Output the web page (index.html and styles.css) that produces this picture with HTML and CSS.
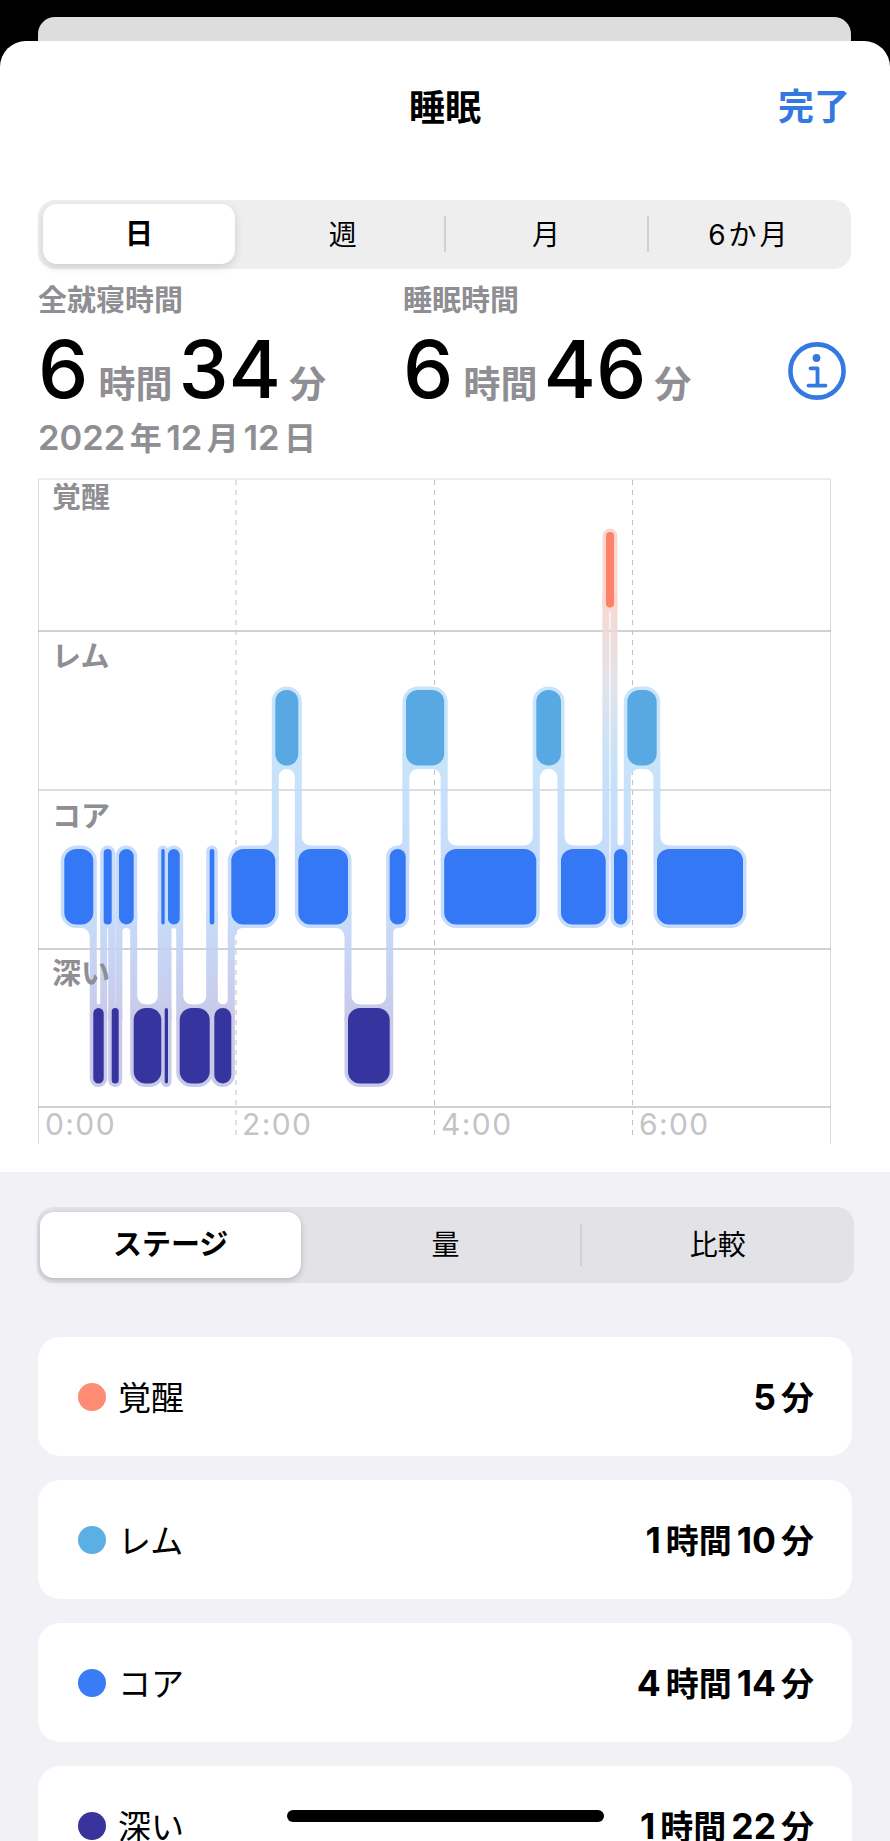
FILE: index.html
```html
<!DOCTYPE html>
<html lang="ja">
<head>
<meta charset="utf-8">
<title>睡眠</title>
<link rel="stylesheet" href="styles.css">
</head>
<body>
<div class="back-card"></div>
<main class="sheet">
  <header class="nav">
    <span></span>
    <h1 class="nav-title">睡眠</h1>
    <a class="nav-done">完了</a>
  </header>

  <div class="seg seg-period">
    <div class="seg-item is-active">日</div>
    <div class="seg-item">週</div>
    <div class="seg-item has-sep">月</div>
    <div class="seg-item has-sep spaced">6か月</div>
  </div>

  <section class="stats">
    <div class="stat">
      <div class="stat-label">全就寝時間</div>
      <div class="stat-value"><b>6</b><span>時間</span><b>34</b><span>分</span></div>
    </div>
    <div class="stat">
      <div class="stat-label">睡眠時間</div>
      <div class="stat-value"><b>6</b><span>時間</span><b>46</b><span>分</span></div>
    </div>
    <svg class="info" viewBox="0 0 58 58" aria-label="情報">
      <circle cx="29" cy="29" r="26.6" fill="none" stroke="#3478e2" stroke-width="4.6"/>
      <circle cx="28.5" cy="16" r="3.9" fill="#3478e2"/>
      <path d="M22.5 26.3h7v17M20.5 43.6h17" fill="none" stroke="#3478e2" stroke-width="3.8" stroke-linecap="round" stroke-linejoin="round"/>
    </svg>
  </section>
  <div class="date">2022<i>年</i>12<i>月</i>12<i>日</i></div>

  <svg id="chart" class="chart" viewBox="38 470 800 680" width="800" height="680">
    <defs>
      <linearGradient id="g-AC" x1="0" y1="0" x2="0" y2="1"><stop offset="0" stop-color="#f9d5cd"/><stop offset=".35" stop-color="#dfe2ea"/><stop offset=".6" stop-color="#c4e0f8"/><stop offset="1" stop-color="#c2dafa"/></linearGradient>
      <linearGradient id="g-RC" x1="0" y1="0" x2="0" y2="1"><stop offset="0" stop-color="#c4e2fa"/><stop offset="1" stop-color="#c2dafa"/></linearGradient>
      <linearGradient id="g-CD" x1="0" y1="0" x2="0" y2="1"><stop offset="0" stop-color="#c2dafa"/><stop offset="1" stop-color="#c5c5e8"/></linearGradient>
    </defs>
    <g class="grid-frame">
      <path d="M38.5 478H830.5M38.5 478V1143M830.5 478V1143"/>
    </g>
    <g class="grid-row">
      <path d="M38 630H831"/>
      <path class="soft" d="M38 789H831"/>
      <path d="M38 948H831"/>
      <path d="M38 1106H831"/>
    </g>
    <g class="grid-dash">
      <path d="M236 479V1138M434.5 479V1138M632.5 479V1138"/>
    </g>
    <g id="halos" class="halos"></g>
    <g id="bars"></g>
    <g class="chart-label">
      <text x="52" y="507">覚醒</text>
      <text x="52" y="666">レム</text>
      <text x="52" y="826">コア</text>
      <text x="52" y="983">深い</text>
    </g>
    <g class="chart-axis">
      <text x="45" y="1134">0:00</text>
      <text x="242" y="1134">2:00</text>
      <text x="441" y="1134">4:00</text>
      <text x="639" y="1134">6:00</text>
    </g>
  </svg>
</main>

<section class="details">
  <div class="seg seg-mode">
    <div class="seg-item is-active">ステージ</div>
    <div class="seg-item">量</div>
    <div class="seg-item has-sep">比較</div>
  </div>

  <ul class="rows">
    <li class="row"><span class="dot dot-awake"></span><span class="row-name">覚醒</span><span class="row-val">5<i>分</i></span></li>
    <li class="row"><span class="dot dot-rem"></span><span class="row-name">レム</span><span class="row-val">1<i>時間</i>10<i>分</i></span></li>
    <li class="row"><span class="dot dot-core"></span><span class="row-name">コア</span><span class="row-val">4<i>時間</i>14<i>分</i></span></li>
    <li class="row"><span class="dot dot-deep"></span><span class="row-name">深い</span><span class="row-val">1<i>時間</i>22<i>分</i></span></li>
  </ul>
</section>
<div class="home-indicator"></div>
<script src="chart.js"></script>
</body>
</html>
```
FILE: styles.css
```css
* { box-sizing: border-box; }
html, body { margin: 0; padding: 0; }
body {
  position: relative;
  height: 1841px;
  overflow: hidden;
  background: #000;
  font-family: Inter, "Noto Sans CJK JP", sans-serif;
  color: #000;
  padding-top: 17px;
}
.back-card {
  height: 24px;
  margin: 0 39px 0 38px;
  background: #dddddd;
  border-radius: 17px 17px 0 0;
}
.sheet {
  background: #fff;
  border-radius: 26px 26px 0 0;
  padding: 0 39px 21px;
}
.nav {
  height: 134px;
  display: grid;
  grid-template-columns: 1fr auto 1fr;
  align-items: center;
}
.nav-title { margin: 0; font-size: 36px; font-weight: 700; line-height: 44px; }
.nav-done { justify-self: end; font-size: 36px; font-weight: 700; line-height: 44px; color: #3478e2; margin-right: 1px; margin-top: -2px; }

.seg { display: grid; }
.seg-item {
  position: relative;
  display: flex;
  align-items: center;
  justify-content: center;
  font-size: 28px;
  line-height: 36px;
}
.seg-item.spaced { letter-spacing: 3px; }
.seg-item.has-sep::before {
  content: "";
  position: absolute;
  left: -1px;
  width: 2px;
  background: #d0d0d4;
}
.seg-item.is-active {
  background: #fff;
  font-weight: 700;
  box-shadow: 0 3px 8px rgba(0, 0, 0, .14);
}
.seg-period {
  height: 69px;
  margin: 25px 0 0 -1px;
  grid-template-columns: repeat(4, 1fr);
  background: #eeeeef;
  border-radius: 17px;
}
.seg-period .seg-item.has-sep::before { top: 16px; bottom: 17px; }
.seg-period .is-active { margin: 4px 6px 5px 5px; border-radius: 14px; }

.stats { display: flex; margin: 14px 0 0 -1px; }
.stat { flex: 0 0 365px; }
.stat-label { font-size: 29px; line-height: 36px; font-weight: 600; color: #8e8e93; }
.stat-value { display: flex; align-items: baseline; margin-top: 10px; height: 80px; line-height: 80px; }
.stat-value b { font-size: 80px; font-weight: 500; }
.stat-value span { font-size: 37px; font-weight: 600; color: #8e8e93; margin: 0 6px 0 10px; }
.stat-value span:last-child { margin-left: 8px; }
.info { width: 58px; height: 58px; margin: 59px 5px 0 auto; }
.date { margin: 9px 0 0 -1px; font-size: 34.5px; line-height: 40px; font-weight: 600; color: #8e8e93; }
.date i { font-style: normal; font-size: 32px; margin: 0 4.5px; }

.chart { display: block; margin: 12px 0 0 -1px; }
.grid-frame path { fill: none; stroke: #dcdcde; stroke-width: 1; }
.grid-row path { fill: none; stroke: #a4a4a8; stroke-width: 1; }
.grid-row path.soft { stroke: #bdbdc0; }
.grid-dash path { fill: none; stroke: #c2c2c6; stroke-width: 1; stroke-dasharray: 5 5; }
.halos { opacity: .92; }
.bar-A { fill: #ff8069; }
.bar-R { fill: #58a9e3; }
.bar-C { fill: #3478f6; }
.bar-D { fill: #36349f; }
.halo-A { fill: #f9d5cd; }
.halo-R { fill: #c4e2fa; }
.halo-C { fill: #c2dafa; }
.halo-D { fill: #c5c5e8; }
.chart-label text { font-size: 29px; font-weight: 600; fill: #8e8e93; }
.chart-axis text { font-size: 30px; fill: #c4c4c6; letter-spacing: 1.4px; }

.details { background: #f1f1f6; padding: 35px 36px 0 37px; height: 670px; }
.seg-mode {
  height: 76px;
  grid-template-columns: repeat(3, 1fr);
  background: #e2e2e7;
  border-radius: 17px;
}
.seg-mode .seg-item.has-sep::before { top: 17px; bottom: 17px; left: -2px; }
.seg-mode .is-active { margin: 5px 8px 5px 3px; border-radius: 14px; box-shadow: 0 2px 6px rgba(0, 0, 0, .2); font-size: 29px; }

.rows { list-style: none; margin: 54px 0 0; padding: 0 0 0 1px; display: flex; flex-direction: column; gap: 24px; width: 815px; }
.row {
  height: 119px;
  flex: none;
  background: #fff;
  border-radius: 22px;
  padding: 2px 38px 0 40px;
  display: flex;
  align-items: center;
  font-size: 33px;
  line-height: 34px;
}
.dot { width: 28px; height: 28px; border-radius: 50%; margin: -2px 12px 0 0; }
.dot-awake { background: #fe8b74; }
.dot-rem { background: #5ab0e4; }
.dot-core { background: #3a7bf6; }
.dot-deep { background: #38349c; }
.row-val { margin-left: auto; font-size: 35.5px; font-weight: 700; }
.row-val i { font-style: normal; font-size: 33px; margin: 0 5px; }
.row-val i:last-child { margin-right: 0; }

.home-indicator {
  position: absolute;
  left: 287px;
  top: 1810px;
  width: 317px;
  height: 12px;
  border-radius: 6px;
  background: #000;
}
```
FILE: chart.js
```js
// Sleep stages in time order: [stage, start x, end x]
var SEGMENTS = [
  ["C", 64.3, 93.3], ["D", 93.3, 103.7], ["C", 103.7, 111.7], ["D", 111.7, 118.7],
  ["C", 119, 133.7], ["D", 133.7, 161.3], ["C", 161.3, 164.7], ["D", 164.7, 168],
  ["C", 168, 179.7], ["D", 179.7, 209.7], ["C", 209.7, 214.3], ["D", 214.3, 231.3],
  ["C", 231.3, 275.3], ["R", 275.3, 298.3], ["C", 298.3, 348], ["D", 348, 389.7],
  ["C", 389.7, 405.7], ["R", 406, 444.2], ["C", 444.2, 536.3], ["R", 536.3, 561],
  ["C", 561, 605.7], ["A", 606, 614], ["C", 614, 627.3], ["R", 627.3, 656.7],
  ["C", 657, 743]
];
var ROW_TOP = { A: 531, R: 689, C: 848, D: 1007 };
var BAR_H = 75.5;
var PAD = 3.5;
var INSET = 16;
var NS = "http://www.w3.org/2000/svg";
var halos = document.getElementById("halos");
var bars = document.getElementById("bars");

function add(parent, tag, attrs) {
  var el = document.createElementNS(NS, tag);
  for (var k in attrs) el.setAttribute(k, attrs[k]);
  parent.appendChild(el);
}
function fillet(w) {
  return Math.max(0, Math.min(8.5, (w - 7) / 2));
}
// Vertical link between two consecutive stages. It starts inside each block
// (so that it squares off the halo's corner) and flares into the block's edge.
function link(a, b) {
  var up = ROW_TOP[a[0]] < ROW_TOP[b[0]] ? a : b;
  var low = up === a ? b : a;
  var x = (a[2] + b[1]) / 2;
  var yu = ROW_TOP[up[0]] + BAR_H + PAD;
  var yl = ROW_TOP[low[0]] - PAD;
  var ru = fillet(up[2] - up[1]);
  var rl = fillet(low[2] - low[1]);
  var l = x - PAD, r = x + PAD, d;
  if (up === a) {
    d = "M" + l + " " + (yu - INSET) + "L" + r + " " + (yu - INSET) +
        "L" + r + " " + (yl - rl) + "A" + rl + " " + rl + " 0 0 0 " + (r + rl) + " " + yl +
        "L" + (r + rl) + " " + (yl + 1) + "L" + r + " " + (yl + INSET) + "L" + l + " " + (yl + INSET) +
        "L" + l + " " + (yu + ru) + "A" + ru + " " + ru + " 0 0 0 " + (l - ru) + " " + yu +
        "L" + (l - ru) + " " + (yu - 1) + "Z";
  } else {
    d = "M" + r + " " + (yu - INSET) + "L" + l + " " + (yu - INSET) +
        "L" + l + " " + (yl - rl) + "A" + rl + " " + rl + " 0 0 1 " + (l - rl) + " " + yl +
        "L" + (l - rl) + " " + (yl + 1) + "L" + l + " " + (yl + INSET) + "L" + r + " " + (yl + INSET) +
        "L" + r + " " + (yu + ru) + "A" + ru + " " + ru + " 0 0 1 " + (r + ru) + " " + yu +
        "L" + (r + ru) + " " + (yu - 1) + "Z";
  }
  add(halos, "path", { d: d, fill: "url(#g-" + up[0] + low[0] + ")" });
}
for (var i = 0; i + 1 < SEGMENTS.length; i++) link(SEGMENTS[i], SEGMENTS[i + 1]);
SEGMENTS.forEach(function (s) {
  var w = s[2] - s[1], rad = Math.min(w / 2, 12), y = ROW_TOP[s[0]];
  add(halos, "rect", { x: s[1] - PAD, y: y - PAD, width: w + 2 * PAD, height: BAR_H + 2 * PAD, rx: rad + PAD, "class": "halo-" + s[0] });
  add(bars, "rect", { x: s[1], y: y, width: w, height: BAR_H, rx: rad, "class": "bar-" + s[0] });
});
```
